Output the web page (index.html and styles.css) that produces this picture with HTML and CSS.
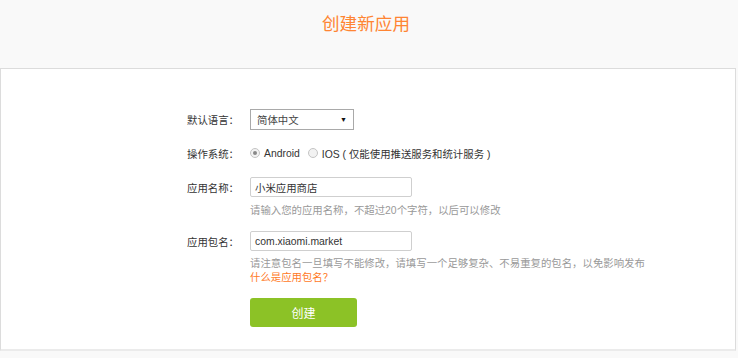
FILE: index.html
```html
<!DOCTYPE html>
<html lang="zh-CN">
<head>
<meta charset="utf-8">
<title>创建新应用</title>
<link rel="stylesheet" href="styles.css">
</head>
<body>
<header class="header">
  <h1 class="title">创建新应用</h1>
</header>
<main class="panel">
  <form class="form">
    <div class="row row-lang">
      <span class="label">默认语言：</span>
      <div class="select"><span>简体中文</span><span class="caret">▼</span></div>
    </div>
    <div class="row row-os">
      <span class="label">操作系统：</span>
      <div class="radios">
        <span class="radio checked"></span><span class="opt">Android</span>
        <span class="radio"></span><span class="opt">IOS ( 仅能使用推送服务和统计服务 )</span>
      </div>
    </div>
    <div class="row row-name">
      <span class="label">应用名称：</span>
      <div class="field">小米应用商店</div>
    </div>
    <div class="hint hint-name">请输入您的应用名称，不超过20个字符，以后可以修改</div>
    <div class="row row-pkg">
      <span class="label">应用包名：</span>
      <div class="field">com.xiaomi.market</div>
    </div>
    <div class="hint hint-pkg">请注意包名一旦填写不能修改，请填写一个足够复杂、不易重复的包名，以免影响发布</div>
    <div class="hint"><a class="link" href="#">什么是应用包名？</a></div>
    <div class="actions"><button type="button" class="btn">创建</button></div>
  </form>
</main>
</body>
</html>
```
FILE: styles.css
```css
html, body {
  margin: 0;
  padding: 0;
  background: #f9f9f9;
}
body {
  font-family: "Liberation Sans", "Noto Sans CJK SC", sans-serif;
  font-size: 10.4px;
  color: #333;
}
.header {
  height: 68px;
  box-sizing: border-box;
  padding-top: 12px;
}
.title {
  margin: 0;
  text-align: center;
  font-size: 17.6px;
  line-height: 24px;
  font-weight: normal;
  color: #ff8533;
  padding-right: 6px;
}
.panel {
  width: 736px;
  box-sizing: border-box;
  background: #fff;
  border-top: 1px solid #dcdcdc;
  border-left: 1px solid #dcdcdc;
  border-right: 1px solid #dcdcdc;
  border-bottom: 2px solid #ebebeb;
  padding: 40px 0 22px 186px;
}
.form {
  display: flex;
  flex-direction: column;
}
.row {
  display: grid;
  grid-template-columns: 63px auto;
  align-items: center;
  justify-items: start;
}
.label {
  color: #333;
}
.select {
  width: 104px;
  height: 21px;
  box-sizing: border-box;
  border: 1px solid #a9a9a9;
  display: flex;
  align-items: center;
  justify-content: space-between;
  padding: 0 6px 0 6px;
  color: #444;
}
.caret {
  font-size: 7px;
  color: #111;
}
.row-os {
  margin-top: 15px;
  height: 16px;
}
.radios {
  display: flex;
  align-items: center;
}
.radio {
  width: 8px;
  height: 8px;
  border-radius: 50%;
  border: 1px solid #c4c4c4;
  background: #f2f2f2;
  margin: 0 4px 0 0;
  position: relative;
}
.radio.checked::after {
  content: "";
  position: absolute;
  left: 2px;
  top: 2px;
  width: 4px;
  height: 4px;
  border-radius: 50%;
  background: #888;
}
.opt {
  margin-right: 8px;
  white-space: pre;
}
.row-name {
  margin-top: 16px;
}
.field {
  width: 162px;
  height: 20px;
  box-sizing: border-box;
  border: 1px solid #cfcfcf;
  border-radius: 2px;
  padding: 0 4px;
  display: flex;
  align-items: center;
  color: #333;
}
.hint {
  margin-left: 63px;
  line-height: 14px;
  color: #999;
}
.hint-name {
  margin-top: 7px;
}
.row-pkg {
  margin-top: 13px;
}
.hint-pkg {
  margin-top: 6px;
}
.link {
  color: #ff7a1f;
  text-decoration: none;
}
.actions {
  margin: 13px 0 0 63px;
}
.btn {
  width: 107px;
  height: 29px;
  border: none;
  border-radius: 3px;
  background: #8cc226;
  color: #fff;
  font-family: "Liberation Sans", "Noto Sans CJK SC", sans-serif;
  font-size: 12px;
  padding: 0;
}
```
